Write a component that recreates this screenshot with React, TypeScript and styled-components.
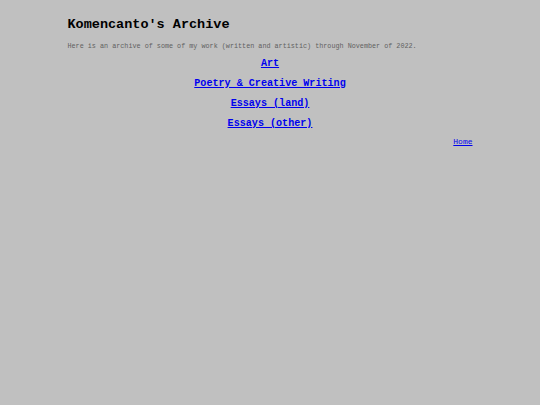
import React from 'react';
import styled, { createGlobalStyle } from 'styled-components';

const GlobalStyle = createGlobalStyle`
  html, body {
    margin: 0;
    padding: 0;
    background: #c0c0c0;
    font-family: "Liberation Mono", "Courier New", monospace;
  }
`;

const Page = styled.div`
  width: 75%;
  margin: 0 auto;
  padding-top: 17px;
`;

const Title = styled.h1`
  font-size: 13.5px;
  font-weight: bold;
  color: #000;
  margin: 0;
  line-height: 16px;
`;

const Intro = styled.p`
  font-size: 6.77px;
  color: #606060;
  margin: 9px 0 0;
  line-height: 8px;
`;

const LinkList = styled.div`
  display: flex;
  flex-direction: column;
  align-items: center;
  gap: 8px;
  margin-top: 8px;
`;

const NavLink = styled.a`
  font-size: 10.1px;
  font-weight: bold;
  line-height: 12px;
  color: #0000ee;
  text-decoration: underline;
`;

const Footer = styled.div`
  text-align: right;
  margin-top: 1px;
`;

const HomeLink = styled.a`
  font-size: 8px;
  line-height: 10px;
  color: #0000ee;
  text-decoration: underline;
`;

const links = ['Art', 'Poetry & Creative Writing', 'Essays (land)', 'Essays (other)'];

const App: React.FC = () => {
  return (
    <>
      <GlobalStyle />
      <Page>
        <Title>Komencanto's Archive</Title>
        <Intro>
          Here is an archive of some of my work (written and artistic) through November of 2022.
        </Intro>
        <LinkList>
          {links.map((label) => (
            <NavLink key={label} href="#">
              {label}
            </NavLink>
          ))}
        </LinkList>
        <Footer>
          <HomeLink href="#">Home</HomeLink>
        </Footer>
      </Page>
    </>
  );
};

export default App;
